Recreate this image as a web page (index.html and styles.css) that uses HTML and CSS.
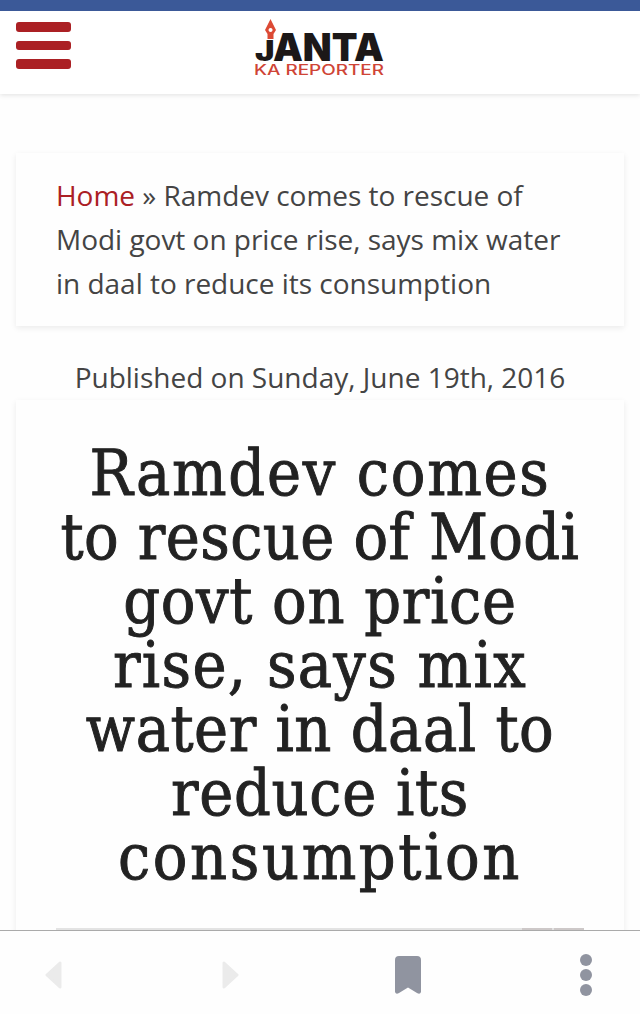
FILE: index.html
```
<!DOCTYPE html>
<html lang="en">
<head>
    <meta charset="UTF-8">
    <meta name="viewport" content="width=device-width, initial-scale=1.0">
    <title>Janta Ka Reporter</title>
    <link rel="stylesheet" href="styles.css">
</head>
<body>
    <header class="header">
        <button class="menu-button" aria-label="Menu">
            <span></span>
            <span></span>
            <span></span>
        </button>
        <svg class="logo" width="132" height="60" viewBox="0 0 132 60">
            <path class="nib" fill-rule="evenodd" d="M16.5 1 L22 12 L19.5 16 V21 H13.5 V16 L11 12 Z M16.5 10 a2 2 0 1 0 0.1 0 Z" />
            <text class="logo-j" x="1" y="43" textLength="19.5" lengthAdjust="spacingAndGlyphs">J</text>
            <text class="logo-name" x="19" y="43" textLength="111" lengthAdjust="spacingAndGlyphs">ANTA</text>
            <text class="logo-sub" x="0" y="57" textLength="130" lengthAdjust="spacingAndGlyphs">KA REPORTER</text>
        </svg>
    </header>

    <main class="content">
        <nav class="breadcrumb card">
            <a href="#">Home</a> » Ramdev comes to rescue of<br>
            Modi govt on price rise, says mix water<br>
            in daal to reduce its consumption
        </nav>
        <div class="published">Published on Sunday, June 19th, 2016</div>
        <article class="article card">
            <h1>
                <span class="l1">Ramdev comes</span>
                <span class="l2">to rescue of Modi</span>
                <span class="l3">govt on price</span>
                <span class="l4">rise, says mix</span>
                <span class="l5">water in daal to</span>
                <span class="l6">reduce its</span>
                <span class="l7">consumption</span>
            </h1>
            <div class="photo"><span></span><span></span></div>
        </article>
    </main>

    <footer class="toolbar">
        <svg class="arrow" width="18" height="30" viewBox="0 0 18 30">
            <path d="M15 2 V26 L2 14 Z" />
        </svg>
        <svg class="arrow" width="18" height="30" viewBox="0 0 18 30">
            <path d="M2 2 V26 L15 14 Z" />
        </svg>
        <svg class="bookmark" width="26" height="40" viewBox="0 0 26 40">
            <path d="M4 0 H22 Q26 0 26 4 V36 Q25 39 22 37 L13 31.5 L4 37 Q1 39 0 36 V4 Q0 0 4 0 Z" />
        </svg>
        <svg class="more" width="12" height="42" viewBox="0 0 12 42">
            <circle cx="6" cy="6" r="6" />
            <circle cx="6" cy="21" r="6" />
            <circle cx="6" cy="36" r="6" />
        </svg>
    </footer>
</body>
</html>
```
FILE: styles.css
```
* {
    box-sizing: border-box;
}

body {
    margin: 0;
    height: 1014px;
    overflow: hidden;
    display: flex;
    flex-direction: column;
    background-color: #fefefe;
    color: #444;
    font-family: 'Open Sans', sans-serif;
    font-size: 28px;
    line-height: 44px;
}

.header {
    flex: none;
    height: 94px;
    border-top: 11px solid #3b5998;
    padding: 0 16px;
    display: grid;
    grid-template-columns: 55px 1fr 55px;
    align-items: start;
    justify-items: center;
    background: #fff;
    box-shadow: 0 1px 5px rgba(0, 0, 0, 0.12);
}

.menu-button {
    display: flex;
    flex-direction: column;
    gap: 9px;
    margin-top: 11px;
    padding: 0;
    border: none;
    background: none;
}

.menu-button span {
    width: 55px;
    height: 9.5px;
    border-radius: 3px;
    background-color: #ab2024;
}

.logo {
    margin-top: 7px;
}

.nib {
    fill: #dc4a35;
}

.logo text {
    font-family: Inter, sans-serif;
}

.logo-j,
.logo-name {
    font-weight: 900;
    fill: #1c1818;
}

.logo-j {
    font-size: 28px;
}

.logo-name {
    font-size: 39px;
}

.logo-sub {
    font-size: 14px;
    font-weight: 500;
    fill: #cf4436;
}

.content {
    flex: 1;
    min-height: 0;
    overflow: hidden;
    padding: 59px 16px 0;
}

.card {
    background: #fefefe;
    box-shadow: 0 2px 6px rgba(0, 0, 0, 0.08);
}

.breadcrumb {
    height: 173px;
    padding: 20px 40px;
    letter-spacing: -0.02px;
    white-space: nowrap;
}

.breadcrumb a {
    color: #ab2024;
    text-decoration: none;
}

.published {
    margin: 29px 0 1px;
    text-align: center;
}

.article {
    height: 640px;
    padding: 41px 40px 0;
}

h1 {
    margin: 0;
    color: #222;
    font-family: 'Roboto Slab', 'DejaVu Serif Condensed', 'DejaVu Serif', serif;
    font-size: 64px;
    font-weight: 400;
    line-height: 64px;
    text-align: center;
    -webkit-text-stroke: 0.9px #222;
}

h1 span {
    display: block;
    white-space: nowrap;
}

.l1 {
    letter-spacing: 1.7px;
}

.l2 {
    letter-spacing: 0.4px;
}

.l3 {
    letter-spacing: 0.7px;
}

.l4 {
    letter-spacing: 1.3px;
}

.l5 {
    letter-spacing: 0.5px;
}

.l6 {
    letter-spacing: 0.7px;
}

.l7 {
    letter-spacing: 2.6px;
}

.photo {
    display: flex;
    justify-content: flex-end;
    gap: 2px;
    height: 40px;
    margin-top: 39px;
    background-color: #e3e3e3;
}

.photo span {
    width: 30px;
    background-color: #cdc8c8;
}

.toolbar {
    flex: none;
    height: 84px;
    border-top: 1px solid #aaa;
    padding: 0 48px 0 45px;
    display: grid;
    grid-template-columns: 177px 173px 1fr 12px;
    align-items: start;
    background: #fefefe;
}

.arrow {
    margin-top: 30px;
    fill: #ebebeb;
    stroke: #ebebeb;
    stroke-width: 3;
    stroke-linejoin: round;
}

.bookmark,
.more {
    fill: #9094a0;
}

.bookmark {
    margin-top: 25px;
}

.more {
    margin-top: 23px;
}
```
